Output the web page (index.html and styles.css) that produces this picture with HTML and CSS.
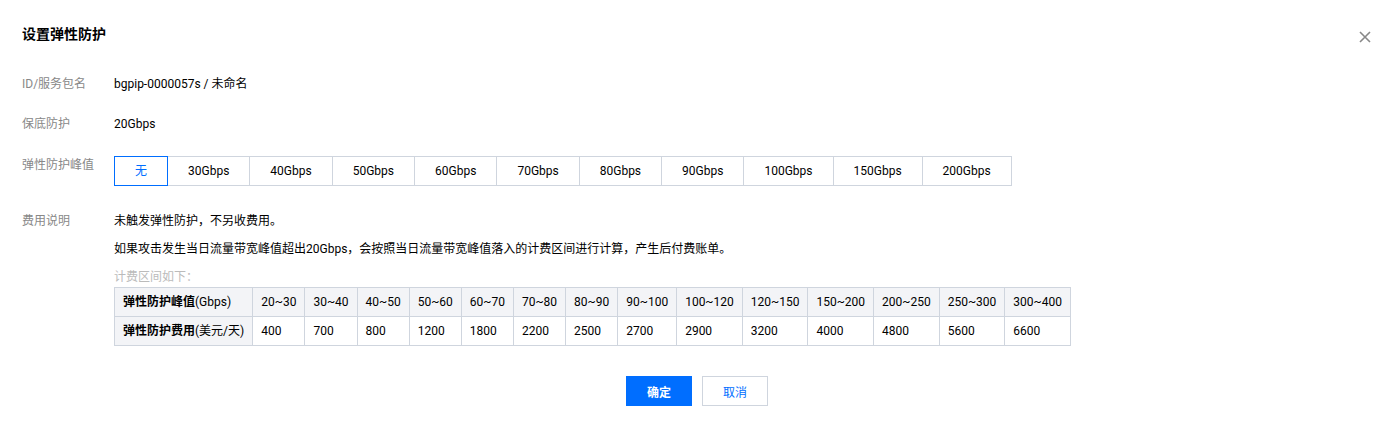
FILE: index.html
```html
<!DOCTYPE html>
<html lang="zh-CN">
<head>
    <meta charset="UTF-8">
    <title>设置弹性防护</title>
    <link rel="stylesheet" href="styles.css">
</head>
<body>
    <section class="dialog">
        <header class="dialog-head">
            <h3>设置弹性防护</h3>
            <button class="close" aria-label="关闭">
                <svg width="12" height="12" viewBox="0 0 12 12"><path d="M1 1 L11 11 M11 1 L1 11" stroke="#888" stroke-width="1.6" fill="none"/></svg>
            </button>
        </header>

        <div class="form">
            <div class="row">
                <label>ID/服务包名</label>
                <div class="value">bgpip-0000057s / 未命名</div>
            </div>
            <div class="row">
                <label>保底防护</label>
                <div class="value">20Gbps</div>
            </div>
            <div class="row row-seg">
                <label>弹性防护峰值</label>
                <div class="value">
                    <div class="segment">
                        <button class="seg-item active">无</button>
                        <button class="seg-item">30Gbps</button>
                        <button class="seg-item">40Gbps</button>
                        <button class="seg-item">50Gbps</button>
                        <button class="seg-item">60Gbps</button>
                        <button class="seg-item">70Gbps</button>
                        <button class="seg-item">80Gbps</button>
                        <button class="seg-item">90Gbps</button>
                        <button class="seg-item">100Gbps</button>
                        <button class="seg-item">150Gbps</button>
                        <button class="seg-item">200Gbps</button>
                    </div>
                </div>
            </div>
            <div class="row row-fee">
                <label>费用说明</label>
                <div class="value">
                    <p>未触发弹性防护，不另收费用。</p>
                    <p>如果攻击发生当日流量带宽峰值超出20Gbps，会按照当日流量带宽峰值落入的计费区间进行计算，产生后付费账单。</p>
                    <p class="hint">计费区间如下：</p>
                    <table class="price">
                        <tr class="head">
                            <th><b>弹性防护峰值</b>(Gbps)</th>
                            <td>20~30</td><td>30~40</td><td>40~50</td><td>50~60</td><td>60~70</td><td>70~80</td><td>80~90</td>
                            <td>90~100</td><td>100~120</td><td>120~150</td><td>150~200</td><td>200~250</td><td>250~300</td><td>300~400</td>
                        </tr>
                        <tr>
                            <th><b>弹性防护费用</b>(美元/天)</th>
                            <td>400</td><td>700</td><td>800</td><td>1200</td><td>1800</td><td>2200</td><td>2500</td>
                            <td>2700</td><td>2900</td><td>3200</td><td>4000</td><td>4800</td><td>5600</td><td>6600</td>
                        </tr>
                    </table>
                </div>
            </div>
        </div>

        <footer class="dialog-foot">
            <button class="btn btn-primary">确定</button>
            <button class="btn">取消</button>
        </footer>
    </section>
</body>
</html>
```

FILE: styles.css
```css
body {
    margin: 0;
    background-color: #fff;
    color: #000;
    font-family: Roboto, "Noto Sans CJK SC", sans-serif;
    font-size: 12px;
}

button {
    font-family: inherit;
    font-size: 12px;
    cursor: pointer;
}

.dialog {
    padding: 24px 25px 0 22px;
}

.dialog-head {
    display: flex;
    justify-content: space-between;
    align-items: center;
    height: 20px;
}

.dialog-head h3 {
    margin: 0;
    font-size: 14px;
    line-height: 20px;
    font-weight: bold;
}

.close {
    border: none;
    background: none;
    padding: 0;
    width: 12px;
    height: 12px;
    display: flex;
    margin-top: 6px;
}

.form {
    padding-top: 30px;
}

.row {
    display: flex;
    align-items: flex-start;
    line-height: 20px;
    margin-bottom: 20px;
}

.row label {
    width: 92px;
    flex: none;
    color: #888;
}

.row-seg {
    margin-top: 22px;
    margin-bottom: 25px;
}

.row-seg label {
    line-height: 16px;
    padding-top: 1px;
}

.segment {
    display: flex;
}

.seg-item {
    position: relative;
    height: 30px;
    padding: 0 20px;
    margin-left: -1px;
    border: 1px solid #cfd5de;
    background-color: #fff;
    color: #000;
    line-height: 28px;
}

.seg-item:first-child {
    margin-left: 0;
}

.seg-item.active {
    border-color: #006eff;
    color: #006eff;
    z-index: 1;
}

.row-fee {
    margin-bottom: 0;
}

.row-fee p {
    margin: 0 0 8px;
}

.row-fee p.hint {
    color: #bbb;
    margin-bottom: 0;
}

.price {
    border-collapse: collapse;
}

.price th,
.price td {
    border: 1px solid #cfd5de;
    padding: 4px 8px;
    line-height: 20px;
    text-align: left;
    white-space: nowrap;
}

.price th {
    font-weight: normal;
    background-color: #f3f4f7;
}

.price tr.head td {
    background-color: #f3f4f7;
}

.dialog-foot {
    display: flex;
    justify-content: center;
    gap: 10px;
    padding-top: 30px;
    padding-left: 1px;
}

.btn {
    width: 66px;
    height: 30px;
    border: 1px solid #cfd5de;
    background-color: #fff;
    color: #006eff;
}

.btn-primary {
    border-color: #006eff;
    background-color: #006eff;
    color: #fff;
    font-weight: bold;
}
```
